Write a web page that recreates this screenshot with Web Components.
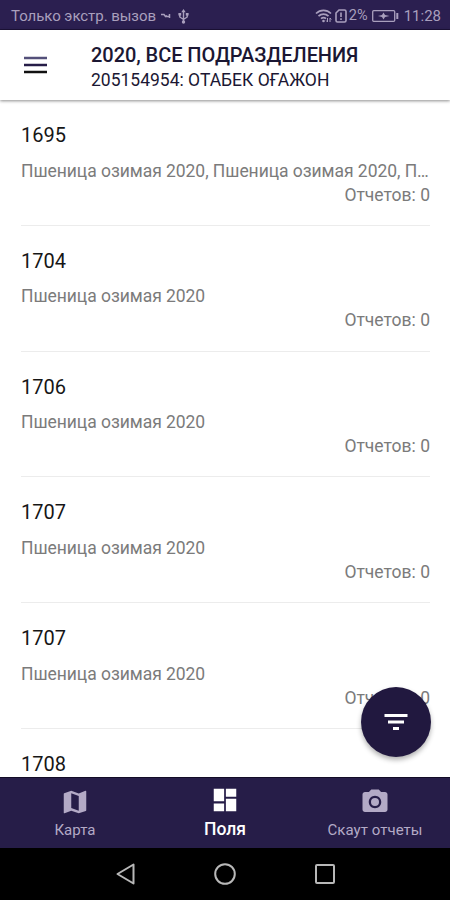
<!DOCTYPE html>
<html lang="ru">
<head>
<meta charset="utf-8">
<title>Поля</title>
<style>
  html, body {
    margin: 0;
    height: 100%;
    overflow: hidden;
  }

  body {
    font-family: Roboto, "Noto Sans", sans-serif;
    background: #fff;
    --clr-primary: #261d48;
    --clr-status: #2b1f50;
    --clr-muted: #b3aac6;
    --clr-text: #161616;
    --clr-secondary: #7b7b7b;
  }
</style>
</head>
<body>
<app-screen>
  <status-bar slot="top" carrier="Только экстр. вызов" battery="2%" time="11:28"></status-bar>
  <app-header slot="top">
    <span slot="title">2020, ВСЕ ПОДРАЗДЕЛЕНИЯ</span>
    <span slot="subtitle">205154954: ОТАБЕК ОҒАЖОН</span>
  </app-header>

  <field-item name="1695" reports="0">Пшеница озимая 2020, Пшеница озимая 2020, П…</field-item>
  <field-item name="1704" reports="0">Пшеница озимая 2020</field-item>
  <field-item name="1706" reports="0">Пшеница озимая 2020</field-item>
  <field-item name="1707" reports="0">Пшеница озимая 2020</field-item>
  <field-item name="1707" reports="0">Пшеница озимая 2020</field-item>
  <field-item name="1708"></field-item>

  <filter-button slot="float"></filter-button>

  <tab-bar slot="bottom">
    <tab-item icon="map">Карта</tab-item>
    <tab-item icon="dashboard" active>Поля</tab-item>
    <tab-item icon="camera">Скаут отчеты</tab-item>
  </tab-bar>
  <system-nav slot="bottom"></system-nav>
</app-screen>

<script>
  const ICONS = {
    map: `<path d="M20.5 3l-.16.03L15 5.1 9 3 3.36 4.9c-.21.07-.36.25-.36.48V20.5c0 .28.22.5.5.5l.16-.03L9 18.9l6 2.1 5.64-1.9c.21-.07.36-.25.36-.48V3.5c0-.28-.22-.5-.5-.5zM15 19l-6-2.110V5l6 2.110V19z"/>`,
    dashboard: `<path d="M3 13h8.300V3H3v10zm0 8h8.300v-6.300H3V21zm9.700 0H21V11h-8.300v10zm0-18v6.300H21V3h-8.300z"/>`,
    camera: `<circle cx="12" cy="12" r="3.200"/><path d="M9 2L7.170 4H4c-1.100 0-2 .9-2 2v12c0 1.100.9 2 2 2h16c1.100 0 2-.9 2-2V6c0-1.100-.9-2-2-2h-3.170L15 2H9zm3 15c-2.760 0-5-2.240-5-5s2.240-5 5-5 5 2.240 5 5-2.240 5-5 5z"/>`,
  };

  // Attach an open shadow root and fill it with markup
  function render(host, html) {
    const template = document.createElement("template");
    template.innerHTML = html;
    const root = host.shadowRoot || host.attachShadow({ mode: "open" });
    root.replaceChildren(template.content.cloneNode(true));
  }

  class AppScreen extends HTMLElement {
    connectedCallback() {
      render(this, /* html */ `
        <style>
          :host {
            display: flex;
            flex-direction: column;
            position: relative;
            height: 100vh;
            overflow: hidden;
          }

          main {
            flex: 1;
            min-height: 0;
            overflow: hidden;
            padding: 0 20px 0 21px;
          }

          .float {
            position: absolute;
            right: 19.500px;
            bottom: 143px;
          }
        </style>
        <slot name="top"></slot>
        <main><slot></slot></main>
        <slot name="bottom"></slot>
        <div class="float"><slot name="float"></slot></div>
      `);
    }
  }

  class StatusBar extends HTMLElement {
    connectedCallback() {
      render(this, /* html */ `
        <style>
          :host {
            display: flex;
            align-items: center;
            box-sizing: border-box;
            flex: none;
            height: 30px;
            padding: 3px 9px 0 11px;
            background: var(--clr-status);
            border-bottom: 1px solid #1d1238;
            color: #a99fbd;
            font-size: 15px;
            line-height: 20px;
            white-space: nowrap;
          }

          svg {
            display: block;
            flex: none;
          }

          .carrier { letter-spacing: -0.05px; }
          .key { margin-left: 5px; }
          .usb { margin-left: 7px; }
          .wifi { margin-left: auto; }
          .sim { margin-left: 3px; }
          .percent { margin-left: 2px; font-size: 14.500px; }
          .battery { margin: 0 5px 0 4px; }
        </style>
        <span class="carrier">${this.getAttribute("carrier")}</span>
        <svg class="key" width="10" height="6" viewBox="0 0 10 6" fill="none" stroke="currentColor" stroke-width="1.500">
          <path d="M0 1.500h3l1.500 2 1.500-1M4.500 3.500h4M8.500 1v4"/>
        </svg>
        <svg class="usb" width="11" height="15" viewBox="0 0 11 15" fill="none" stroke="currentColor" stroke-width="1.400">
          <path d="M5.500 2v11M1.800 5v3l3.700 2.500L9.200 8V5"/>
          <path d="M5.500 0L3.300 3.200h4.400zM.4 4h2.800v2.400H.4zM7.800 4h2.800v2.400H7.800z" fill="currentColor" stroke="none"/>
          <circle cx="5.500" cy="13" r="1.700" fill="currentColor" stroke="none"/>
        </svg>
        <svg class="wifi" width="17" height="14" viewBox="0 0 17 14" fill="none" stroke="currentColor" stroke-width="1.700">
          <path d="M1 4.500C5.300.2 11.700.2 16 4.500M3.500 7.200c2.800-2.700 7.200-2.700 10 0M6 9.700c1.600-1.400 3.400-1.400 5 0"/>
          <circle cx="8.500" cy="12" r="1.300" fill="currentColor" stroke="none"/>
          <path d="M12.500 9v4M11.200 11.500l1.300 1.500M15 13V9l1.300 1.500" stroke-width="1"/>
        </svg>
        <svg class="sim" width="12" height="14" viewBox="0 0 12 14" fill="none" stroke="currentColor" stroke-width="1.600">
          <path d="M4 1h5.500q1.500 0 1.500 1.500v9q0 1.500-1.500 1.500h-7Q1 13 1 11.500V4zM6 3.500V8M6 9.300v1.700"/>
        </svg>
        <span class="percent">${this.getAttribute("battery")}</span>
        <svg class="battery" width="27" height="12" viewBox="0 0 27 12" fill="none" stroke="currentColor" stroke-width="1.300">
          <rect x=".7" y=".7" width="22" height="10.600" rx="1"/>
          <path d="M25.300 3v6" stroke-width="2"/>
          <path d="M6 6l4-1 1.500-2.500L13 5l4.500 1L13 7l-1.500 2.500L10 7z" fill="currentColor" stroke="none"/>
        </svg>
        <span class="time">${this.getAttribute("time")}</span>
      `);
    }
  }

  class AppHeader extends HTMLElement {
    connectedCallback() {
      render(this, /* html */ `
        <style>
          :host {
            display: flex;
            flex: none;
            box-sizing: border-box;
            height: 70px;
            padding-left: 24px;
            background: #fff;
            box-shadow: 0 1px 3px rgba(0, 0, 0, 0.45);
            color: #1b1733;
            z-index: 1;
          }

          svg { margin: 26px 44px 0 0; }

          .titles {
            display: flex;
            flex-direction: column;
            padding-top: 13px;
            white-space: nowrap;
          }

          .title {
            font-size: 20px;
            line-height: 25px;
            font-weight: 500;
            letter-spacing: -0.050px;
          }

          .subtitle {
            font-size: 17.500px;
            line-height: 25px;
          }
        </style>
        <svg width="23" height="18" viewBox="0 0 23 18">
          <path d="M0 2h23" stroke="#54507a" stroke-width="2.500"/>
          <path d="M0 9h23" stroke="#261d48" stroke-width="2.500"/>
          <path d="M0 16h23" stroke="#111" stroke-width="2.500"/>
        </svg>
        <div class="titles">
          <div class="title"><slot name="title"></slot></div>
          <div class="subtitle"><slot name="subtitle"></slot></div>
        </div>
      `);
    }
  }

  class FieldItem extends HTMLElement {
    connectedCallback() {
      const reports = this.getAttribute("reports");
      render(this, /* html */ `
        <style>
          :host {
            display: flex;
            flex-direction: column;
            box-sizing: border-box;
            height: 125.800px;
            padding-top: 23px;
            border-bottom: 1px solid #ececec;
            color: var(--clr-secondary);
            font-size: 17.500px;
            line-height: 24px;
          }

          .name {
            color: var(--clr-text);
            font-size: 20px;
            margin-bottom: 11.500px;
          }

          .description {
            letter-spacing: -0.05px;
            white-space: nowrap;
          }

          .reports { text-align: right; }
        </style>
        <div class="name">${this.getAttribute("name")}</div>
        <div class="description"><slot></slot></div>
        ${reports === null ? "" : `<div class="reports">Отчетов: ${reports}</div>`}
      `);
    }
  }

  class FilterButton extends HTMLElement {
    connectedCallback() {
      render(this, /* html */ `
        <style>
          :host { display: block; }

          button {
            display: flex;
            align-items: center;
            justify-content: center;
            width: 70px;
            height: 70px;
            padding: 0;
            border: 0;
            border-radius: 50%;
            background: #21183f;
            box-shadow: 0 3px 5px rgba(0, 0, 0, 0.3);
          }
        </style>
        <button aria-label="Фильтр">
          <svg width="24" height="18" viewBox="0 0 24 18" stroke="#fff" stroke-width="3">
            <path d="M.5 2.500h23M4 9h16M9 15.500h6"/>
          </svg>
        </button>
      `);
    }
  }

  class TabBar extends HTMLElement {
    connectedCallback() {
      render(this, /* html */ `
        <style>
          :host {
            display: flex;
            flex: none;
            box-sizing: border-box;
            height: 71px;
            background: var(--clr-primary);
            border-top: 1px solid #120c26;
          }

          ::slotted(*) { flex: 1; }
        </style>
        <slot></slot>
      `);
    }
  }

  class TabItem extends HTMLElement {
    connectedCallback() {
      render(this, /* html */ `
        <style>
          :host {
            display: flex;
            flex-direction: column;
            align-items: center;
            padding-top: 9px;
            color: var(--clr-muted);
            font-size: 15px;
            line-height: 20px;
            letter-spacing: 0.05px;
            white-space: nowrap;
          }

          :host([active]) {
            padding-top: 7px;
            color: #fff;
            font-size: 17.500px;
            font-weight: 500;
            letter-spacing: 0;
          }

          svg {
            display: block;
            margin-bottom: 3px;
          }

          :host([active]) svg { margin-bottom: 4px; }
        </style>
        <svg width="30" height="30" viewBox="0 0 24 24" fill="currentColor">${ICONS[this.getAttribute("icon")]}</svg>
        <slot></slot>
      `);
    }
  }

  class SystemNav extends HTMLElement {
    connectedCallback() {
      render(this, /* html */ `
        <style>
          :host {
            display: flex;
            flex: none;
            align-items: center;
            justify-content: center;
            gap: 76px;
            height: 52px;
            background: #000;
          }
        </style>
        <svg width="24" height="24" viewBox="0 0 24 24" fill="none" stroke="#b8b8b8" stroke-width="2" stroke-linejoin="round">
          <path d="M20.500 2.500v19L4.500 12z"/>
        </svg>
        <svg width="24" height="24" viewBox="0 0 24 24" fill="none" stroke="#b8b8b8" stroke-width="2">
          <circle cx="12" cy="12" r="9.800"/>
        </svg>
        <svg width="24" height="24" viewBox="0 0 24 24" fill="none" stroke="#b8b8b8" stroke-width="2">
          <rect x="3" y="3" width="18" height="18" rx="1"/>
        </svg>
      `);
    }
  }

  customElements.define("app-screen", AppScreen);
  customElements.define("status-bar", StatusBar);
  customElements.define("app-header", AppHeader);
  customElements.define("field-item", FieldItem);
  customElements.define("filter-button", FilterButton);
  customElements.define("tab-bar", TabBar);
  customElements.define("tab-item", TabItem);
  customElements.define("system-nav", SystemNav);
</script>
</body>
</html>
